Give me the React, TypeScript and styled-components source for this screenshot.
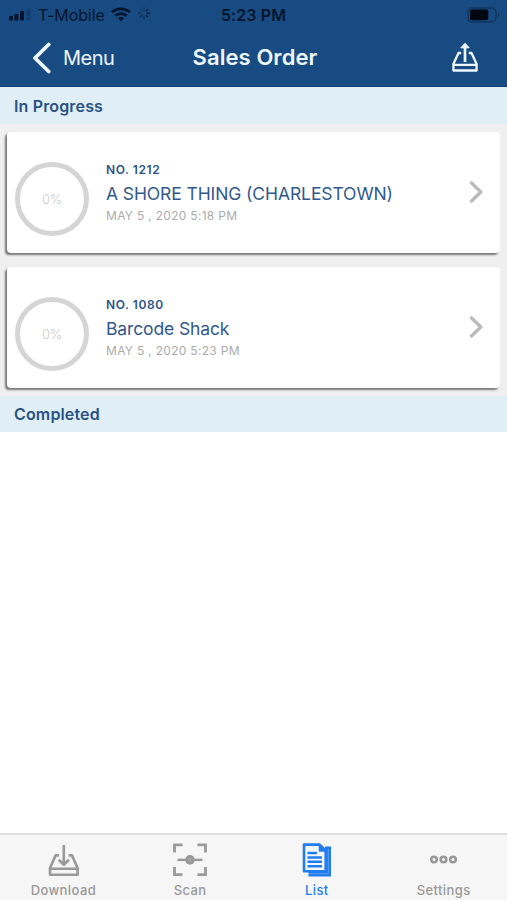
import React from 'react';
import styled, { createGlobalStyle } from 'styled-components';

const GlobalStyle = createGlobalStyle`
  * { box-sizing: border-box; }
  body { margin: 0; background: #fff; font-family: Inter, "Liberation Sans", sans-serif; }
  svg { display: block; flex: none; }
`;

const Screen = styled.div`
  width: 507px;
  height: 900px;
  display: flex;
  flex-direction: column;
  overflow: hidden;
  background: #fff;
`;

const Header = styled.header`
  height: 87px;
  flex: none;
  background: #174b82;
  border-bottom: 1px solid #123f74;
`;

const StatusBar = styled.div`
  height: 29px;
  display: grid;
  grid-template-columns: 1fr auto 1fr;
  align-items: center;
  padding: 0 7px 0 9px;
  color: #04142c;
`;

const Carrier = styled.div`
  display: flex;
  align-items: center;
`;

const CarrierName = styled.span`
  font-size: 16px;
  line-height: 20px;
  letter-spacing: -0.1px;
  margin: 0 6px 0 6px;
`;

const Clock = styled.span`
  font-size: 16px;
  font-weight: 600;
  line-height: 20px;
  letter-spacing: 0.1px;
  margin-right: 2px;
`;

const BatteryWrap = styled.div`
  display: flex;
  justify-content: flex-end;
`;

const NavBar = styled.nav`
  height: 57px;
  display: grid;
  grid-template-columns: 1fr auto 1fr;
  align-items: center;
  padding: 0 29px 0 32px;
  color: #eef6ff;
`;

const BackButton = styled.a`
  display: flex;
  align-items: center;
  gap: 11px;
  font-size: 20px;
  line-height: 24px;
  letter-spacing: -0.5px;
`;

const Title = styled.h1`
  margin: 0 0 2px;
  font-size: 22px;
  font-weight: 600;
  line-height: 26px;
  letter-spacing: 0.08px;
`;

const ShareButton = styled.a`
  display: flex;
  justify-content: flex-end;
  margin-bottom: 1px;
`;

const SectionHeader = styled.h2<{ $height: number }>`
  margin: 0;
  flex: none;
  height: ${(p) => p.$height}px;
  padding: 0 14px;
  display: flex;
  align-items: center;
  background: #e0eef6;
  color: #2a5283;
  font-size: 16px;
  font-weight: 600;
  letter-spacing: 0.15px;
`;

const CardList = styled.div`
  flex: none;
  display: flex;
  flex-direction: column;
  gap: 14px;
  padding: 8px 7px;
  background: #efefef;
`;

const Card = styled.article`
  height: 121px;
  display: flex;
  align-items: center;
  padding: 0 17px 0 8px;
  background: #fff;
  border-radius: 4px;
  box-shadow: -2px 2px 2px rgba(0, 0, 0, 0.5);
`;

const Ring = styled.div`
  width: 74px;
  height: 74px;
  margin-top: 13px;
  flex: none;
  display: flex;
  align-items: center;
  justify-content: center;
  border: 5px solid #d5d5d5;
  border-radius: 50%;
  color: #cccccc;
  font-size: 13px;
  font-weight: 300;
`;

const Details = styled.div`
  flex: 1;
  margin-left: 17px;
  display: flex;
  flex-direction: column;
`;

const OrderNumber = styled.span`
  color: #2c548b;
  font-size: 12px;
  font-weight: 600;
  line-height: 16px;
  letter-spacing: 0.6px;
`;

const Customer = styled.span<{ $tracking: number }>`
  color: #31598d;
  font-size: 17.5px;
  line-height: 29px;
  padding-top: 1px;
  letter-spacing: ${(p) => p.$tracking}px;
`;

const OrderDate = styled.span`
  color: #ababab;
  font-size: 12px;
  line-height: 16px;
  letter-spacing: 0.3px;
`;

const Completed = styled.main`
  flex: 1;
`;

const TabBar = styled.footer`
  height: 67px;
  flex: none;
  display: grid;
  grid-template-columns: repeat(4, 1fr);
  background: #f6f6f6;
  border-top: 2px solid #dedede;
`;

const Tab = styled.a<{ $active?: boolean }>`
  display: flex;
  flex-direction: column;
  align-items: center;
  padding-top: 6px;
  gap: 5px;
  color: ${(p) => (p.$active ? '#1f7df0' : '#999999')};
`;

const TabLabel = styled.span`
  font-size: 13px;
  font-weight: 500;
  line-height: 16px;
  letter-spacing: 0.4px;
`;

const SignalIcon = () => (
  <svg width="23" height="13" viewBox="0 0 23 13" fill="currentColor">
    <rect x="0" y="8" width="4" height="4.5" rx="1" />
    <rect x="5.3" y="6" width="4" height="6.5" rx="1" />
    <rect x="11" y="3" width="4" height="9.5" rx="1" />
    <rect x="17.5" y="0.5" width="4" height="12" rx="1" opacity="0.25" />
  </svg>
);

const WifiIcon = () => (
  <svg width="20" height="15" viewBox="0 0 20 15" fill="none" stroke="currentColor" strokeWidth="2.7">
    <path d="M1 5.3C6 .6 14 .6 19 5.3" />
    <path d="M4.3 8.8c3.3-3 8.1-3 11.4 0" />
    <path d="M7 11.2c1.8-1.5 4.2-1.5 6 0l-3 3z" fill="currentColor" stroke="none" />
  </svg>
);

const SpinnerSvg = styled.svg`
  margin: 0 0 3px 6px;
`;

const SpinnerIcon = () => (
  <SpinnerSvg width="14" height="14" viewBox="0 0 14 14" stroke="currentColor" strokeWidth="1.3" strokeLinecap="round">
    <path d="M7 1.5v2.3M3.2 3.2l1.6 1.6M1.5 7h2.3" opacity=".3" />
    <path d="M10.8 3.2L9.2 4.8M12.5 7h-2.3M10.8 10.8L9.2 9.2" opacity=".75" />
    <path d="M7 12.5v-2.3M3.2 10.8l1.6-1.6" opacity=".5" />
  </SpinnerSvg>
);

const BatteryIcon = () => (
  <svg width="33" height="16" viewBox="0 0 33 16">
    <rect x="1" y="1" width="28" height="14" rx="4" fill="none" stroke="#0f3560" strokeWidth="1.3" />
    <rect x="3" y="2.5" width="18.3" height="10.8" rx="2" fill="#020711" />
    <path d="M31 5.5c1.5.6 1.5 4.4 0 5z" fill="#0f3560" />
  </svg>
);

const BackIcon = () => (
  <svg width="20" height="32" viewBox="0 0 20 32" fill="none" stroke="currentColor" strokeWidth="3.8" strokeLinecap="round" strokeLinejoin="round">
    <path d="M16.7 2.5L3 16l13.7 13.5" />
  </svg>
);

const ChevronSvg = styled.svg`
  margin-bottom: 2px;
`;

const ChevronIcon = () => (
  <ChevronSvg width="14" height="24" viewBox="0 0 14 24" fill="none" stroke="#bababa" strokeWidth="3.3" strokeLinejoin="round">
    <path d="M1.5 2L11.8 12 1.5 22" />
  </ChevronSvg>
);

const ShareIcon = () => (
  <svg width="26" height="30" viewBox="0 0 26 30" fill="none" stroke="currentColor" strokeWidth="2.3" strokeLinejoin="round">
    <path d="M9.2 11H6.5L1.4 22v6.5h23.2V22L19.5 11h-2.7M1.4 22.8h23.2" />
    <path d="M13 20V4" strokeWidth="2.7" />
    <path d="M8.8 5.8L13 1.2l4.2 4.6z" fill="currentColor" strokeWidth="1" />
  </svg>
);

const DownloadIcon = () => (
  <svg width="34" height="36" viewBox="0 0 34 36" fill="none" stroke="currentColor" strokeWidth="2.6" strokeLinejoin="round">
    <path d="M13 14.4H9.6L4 27v6.8h27.6V27L26 14.4h-3.4M4 27.7h27.6" />
    <path d="M17.8 4v19M12.7 18.7l5.1 5 5.1-5" />
  </svg>
);

const ScanIcon = () => (
  <svg width="34" height="36" viewBox="0 0 34 36" fill="none" stroke="currentColor" strokeWidth="2.8">
    <path d="M1.5 11.5V3.8h8M24.5 3.8h8v7.7M32.5 26v7.7h-8M9.5 33.7h-8V26" />
    <path d="M4.5 18.9h25" strokeWidth="2.4" />
    <circle cx="17" cy="18.9" r="4.8" fill="currentColor" stroke="none" />
    <path d="M17 17v3.8" stroke="#b4b4b4" strokeWidth="1.2" />
  </svg>
);

const ListIcon = () => (
  <svg width="34" height="36" viewBox="0 0 34 36" fill="none" stroke="currentColor" strokeWidth="2.6" strokeLinejoin="round">
    <path d="M25 5.5h6V35.5H8.5v-5H25z" fill="currentColor" stroke="none" />
    <path d="M4 3.6h15.5l6.2 6v20.7H4z" fill="#f4f8fd" />
    <path d="M19.5 3.6v6.3h6.2z" fill="currentColor" strokeWidth="1.5" />
    <path d="M7.5 12h9.5M7.5 16.4h14.5M7.5 20.8h14.5M7.5 25.2h14.5" strokeWidth="2.5" />
    <path d="M8.5 32.7h19.8V8" stroke="#6faaf0" strokeWidth=".7" />
  </svg>
);

const MoreIcon = () => (
  <svg width="34" height="36" viewBox="0 0 34 36" fill="none" stroke="currentColor" strokeWidth="2.6">
    <circle cx="7" cy="18.5" r="2.8" />
    <circle cx="16.5" cy="18.5" r="2.8" />
    <circle cx="26" cy="18.5" r="2.8" />
  </svg>
);

const orders = [
  { number: 'NO. 1212', customer: 'A SHORE THING (CHARLESTOWN)', date: 'MAY 5 , 2020 5:18 PM', tracking: -0.1 },
  { number: 'NO. 1080', customer: 'Barcode Shack', date: 'MAY 5 , 2020 5:23 PM', tracking: -0.12 },
];

const tabs = [
  { label: 'Download', Icon: DownloadIcon },
  { label: 'Scan', Icon: ScanIcon },
  { label: 'List', Icon: ListIcon, active: true },
  { label: 'Settings', Icon: MoreIcon },
];

export default function App() {
  return (
    <Screen>
      <GlobalStyle />
      <Header>
        <StatusBar>
          <Carrier>
            <SignalIcon />
            <CarrierName>T-Mobile</CarrierName>
            <WifiIcon />
            <SpinnerIcon />
          </Carrier>
          <Clock>5:23 PM</Clock>
          <BatteryWrap><BatteryIcon /></BatteryWrap>
        </StatusBar>
        <NavBar>
          <BackButton><BackIcon />Menu</BackButton>
          <Title>Sales Order</Title>
          <ShareButton><ShareIcon /></ShareButton>
        </NavBar>
      </Header>
      <SectionHeader $height={37}>In Progress</SectionHeader>
      <CardList>
        {orders.map((order) => (
          <Card key={order.number}>
            <Ring>0%</Ring>
            <Details>
              <OrderNumber>{order.number}</OrderNumber>
              <Customer $tracking={order.tracking}>{order.customer}</Customer>
              <OrderDate>{order.date}</OrderDate>
            </Details>
            <ChevronIcon />
          </Card>
        ))}
      </CardList>
      <SectionHeader $height={36}>Completed</SectionHeader>
      <Completed />
      <TabBar>
        {tabs.map(({ label, Icon, active }) => (
          <Tab key={label} $active={active}>
            <Icon />
            <TabLabel>{label}</TabLabel>
          </Tab>
        ))}
      </TabBar>
    </Screen>
  );
}
